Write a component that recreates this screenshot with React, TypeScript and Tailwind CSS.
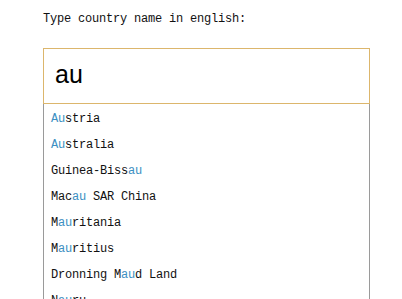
import React from 'react'

const items: [string, number, number][] = [
  ['Austria', 0, 2],
  ['Australia', 0, 2],
  ['Guinea-Bissau', 11, 13],
  ['Macau SAR China', 3, 5],
  ['Mauritania', 1, 3],
  ['Mauritius', 1, 3],
  ['Dronning Maud Land', 10, 12],
  ['Nauru', 1, 3],
]

export default function App() {
  return (
    <div className="w-[402px] h-[299px] overflow-hidden bg-white pl-[43px] pt-[11px] text-[#111]" style={{ fontFamily: '"Liberation Mono", monospace' }}>
      <p className="text-[12px] tracking-[-0.2px] leading-[16px] h-[37px]">Type country name in english:</p>
      <div className="w-[327px]">
        <div className="h-[56px] border border-[#dcb66c] flex items-center pl-[11px] pb-[2px] text-[25px] text-black" style={{ fontFamily: '"Liberation Sans", Arial, sans-serif' }}>
          au
        </div>
        <div className="border border-t-0 border-[#9a9a9a] pt-[2px] w-[327px]">
          {items.map(([name, s, e]) => (
            <div key={name} className="h-[26px] leading-[26px] pl-[7px] text-[12px] tracking-[-0.2px] whitespace-pre">
              {name.slice(0, s)}
              <span className="text-[#3c8fc2]">{name.slice(s, e)}</span>
              {name.slice(e)}
            </div>
          ))}
        </div>
      </div>
    </div>
  )
}
